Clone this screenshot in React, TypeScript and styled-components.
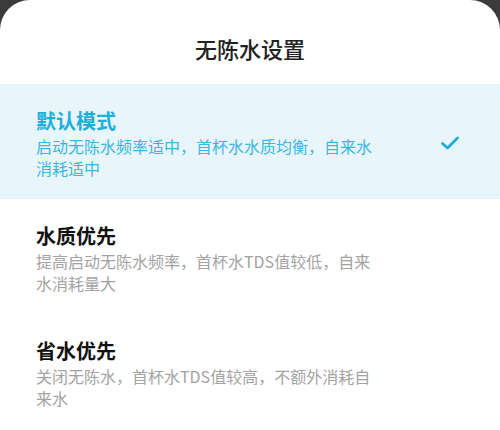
import React from "react";
import styled, { createGlobalStyle } from "styled-components";

const GlobalStyle = createGlobalStyle`
  html, body {
    margin: 0;
    padding: 0;
    background: #3b3b3b;
  }
  body {
    font-family: "Noto Sans CJK SC", "Noto Sans", sans-serif;
  }
`;

type Mode = {
  name: string;
  desc: string;
};

const modes: Mode[] = [
  { name: "默认模式", desc: "启动无陈水频率适中，首杯水水质均衡，自来水消耗适中" },
  { name: "水质优先", desc: "提高启动无陈水频率，首杯水TDS值较低，自来水消耗量大" },
  { name: "省水优先", desc: "关闭无陈水，首杯水TDS值较高，不额外消耗自来水" },
];

const Sheet = styled.div`
  background: #fff;
  border-radius: 30px 30px 0 0;
  height: 430px;
  overflow: hidden;
`;

const Header = styled.h1`
  margin: 0;
  height: 84px;
  display: flex;
  align-items: center;
  justify-content: center;
  padding-top: 12px;
  box-sizing: border-box;
  font-size: 22px;
  font-weight: 500;
  color: #222;
`;

const Row = styled.div<{ $active?: boolean }>`
  display: flex;
  align-items: center;
  height: 115px;
  padding: 3px 40px 0 36px;
  box-sizing: border-box;
  background: ${(p) => (p.$active ? "#e8f6fb" : "#fff")};
`;

const Texts = styled.div`
  flex: 1;
  display: flex;
  flex-direction: column;
  gap: 1px;
`;

const Name = styled.div<{ $active?: boolean }>`
  font-size: 20px;
  line-height: 26px;
  font-weight: 700;
  color: ${(p) => (p.$active ? "#1eaedc" : "#111")};
`;

const Desc = styled.div<{ $active?: boolean }>`
  width: 338px;
  font-size: 16px;
  line-height: 22px;
  color: ${(p) => (p.$active ? "#3ab6e0" : "#a3a3a3")};
`;

const Check = styled.svg`
  width: 20px;
  height: 16px;
  flex: none;
`;

export default function App() {
  return (
    <>
      <GlobalStyle />
      <Sheet>
        <Header>无陈水设置</Header>
        {modes.map((m, i) => {
          const active = i === 0;
          return (
            <Row key={m.name} $active={active}>
              <Texts>
                <Name $active={active}>{m.name}</Name>
                <Desc $active={active}>{m.desc}</Desc>
              </Texts>
              {active && (
                <Check viewBox="0 0 20 16">
                  <path
                    d="M2.5 8.5 L7.5 13 L17.5 3"
                    fill="none"
                    stroke="#1eaedc"
                    strokeWidth={2.8}
                    strokeLinecap="round"
                    strokeLinejoin="round"
                  />
                </Check>
              )}
            </Row>
          );
        })}
      </Sheet>
    </>
  );
}
